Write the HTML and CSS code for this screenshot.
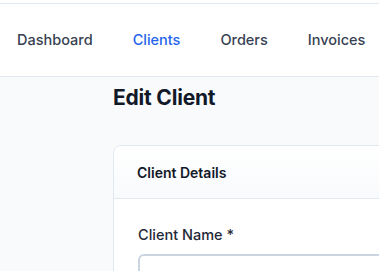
FILE: index.html
```html
<!DOCTYPE html>
<html>
<head>
<meta charset="utf-8">
<title>Edit Client</title>
<link rel="stylesheet" href="styles.css">
</head>
<body>
<div class="topstrip"></div>
<div class="nav">
	<a href="#">Dashboard</a>
	<a href="#" class="active">Clients</a>
	<a href="#">Orders</a>
	<a href="#">Invoices</a>
</div>

<div class="main">
	<h1>Edit Client</h1>

	<div class="card">
		<div class="card-head">Client Details</div>
		<div class="card-body">
			<label class="field-label">Client Name *</label>
			<input class="field" type="text">
		</div>
	</div>
</div>
</body>
</html>
```
FILE: styles.css
```css
body {margin: 0; font-family: Inter, "Open Sans", sans-serif; background: #f8fafc; color: #1e293b; overflow: hidden;}
div.topstrip {height: 3px; background: #fff;}
div.nav {display: flex; align-items: center; gap: 40px; height: 72px; padding: 0 17px; background: #fff; border-top: 1px solid #e2e8f0; border-bottom: 1px solid #e2e8f0; white-space: nowrap;}
div.nav a {font-size: 14.5px; font-weight: 500; color: #374151; text-decoration: none; margin-top: -1px;}
div.nav a.active {color: #2563eb;}
div.main {padding: 7px 0 0 113px; width: 400px;}
h1 {margin: 0 0 33px; font-size: 21px; font-weight: 700; color: #111827; line-height: 28px; letter-spacing: -0.2px;}
div.card {background: #fff; border: 1px solid #e2e8f0; border-radius: 8px;}
div.card-head {height: 52px; display: flex; align-items: center; padding: 0 23px; font-size: 14px; font-weight: 600; color: #111827; background: linear-gradient(#fff, #f8fafc); border-bottom: 1px solid #e2e8f0; border-radius: 8px 8px 0 0;}
div.card-body {padding: 27px 24px;}
label.field-label {display: block; font-size: 14.5px; font-weight: 500; color: #1f2937; margin-bottom: 11px;}
input.field {display: block; width: 100%; height: 40px; box-sizing: border-box; border: 2px solid #cbd5e1; border-radius: 6px;}
```
